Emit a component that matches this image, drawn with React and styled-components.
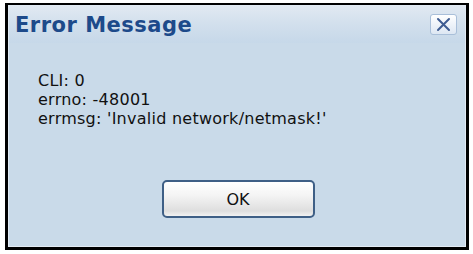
import React from 'react'
import styled, { createGlobalStyle } from 'styled-components'

const GlobalStyle = createGlobalStyle`
  html, body {
    margin: 0;
    padding: 0;
    background: #ffffff;
  }
  * {
    box-sizing: border-box;
  }
`

const Page = styled.div`
  width: 473px;
  height: 254px;
  padding: 3px 4px 4px 5px;
`

const Dialog = styled.div`
  width: 464px;
  height: 247px;
  border: 3px solid #000;
  border-top-width: 2px;
  background: #c9dae9;
  display: flex;
  flex-direction: column;
`

const Inner = styled.div`
  flex: 1;
  border: 1px solid #e2ebf4;
  display: flex;
  flex-direction: column;
`

const Header = styled.div`
  height: 37px;
  display: flex;
  align-items: center;
  justify-content: space-between;
  padding: 1px 8px 0 6px;
  background: linear-gradient(to bottom, #e1e9f2 0%, #d3e0ed 45%, #c6d8e9 100%);
`

const Title = styled.div`
  font-family: Tahoma, "DejaVu Sans", sans-serif;
  font-weight: bold;
  font-size: 21px;
  color: #1d4a8a;
  letter-spacing: 0.5px;
`

const CloseButton = styled.button`
  width: 27px;
  height: 21px;
  padding: 0;
  margin-top: -2px;
  border: 1px solid #a9bfd9;
  border-radius: 3px;
  background: linear-gradient(to bottom, #ffffff 0%, #eef3f9 50%, #dde7f3 100%);
  display: flex;
  align-items: center;
  justify-content: center;
`

const Body = styled.div`
  flex: 1;
  display: flex;
  flex-direction: column;
  padding-top: 28px;
`

const Message = styled.div`
  padding-left: 29px;
`

const Line = styled.div`
  font-family: Tahoma, "DejaVu Sans", sans-serif;
  font-size: 16px;
  line-height: 19px;
  letter-spacing: 0.25px;
  color: #111;
`

const ButtonRow = styled.div`
  display: flex;
  justify-content: center;
  margin-top: 52px;
  padding-left: 2px;
`

const OkButton = styled.button`
  width: 153px;
  height: 38px;
  border: 2px solid #3e5f86;
  border-radius: 5px;
  background: linear-gradient(to bottom, #ffffff 0%, #f4f4f4 40%, #dedede 85%, #f2f2f2 100%);
  font-family: Tahoma, "DejaVu Sans", sans-serif;
  font-size: 16px;
  color: #111;
`

export default function App() {
  return (
    <Page>
      <GlobalStyle />
      <Dialog>
        <Inner>
          <Header>
            <Title>Error Message</Title>
            <CloseButton aria-label="close">
              <svg width="15" height="15" viewBox="0 0 15 15">
                <path d="M2 2 L13 13 M13 2 L2 13" stroke="#3e5c92" strokeWidth="2" strokeLinecap="round" />
              </svg>
            </CloseButton>
          </Header>
          <Body>
            <Message>
              <Line>CLI: 0</Line>
              <Line>errno: -48001</Line>
              <Line>errmsg: 'Invalid network/netmask!'</Line>
            </Message>
            <ButtonRow>
              <OkButton>OK</OkButton>
            </ButtonRow>
          </Body>
        </Inner>
      </Dialog>
    </Page>
  )
}
